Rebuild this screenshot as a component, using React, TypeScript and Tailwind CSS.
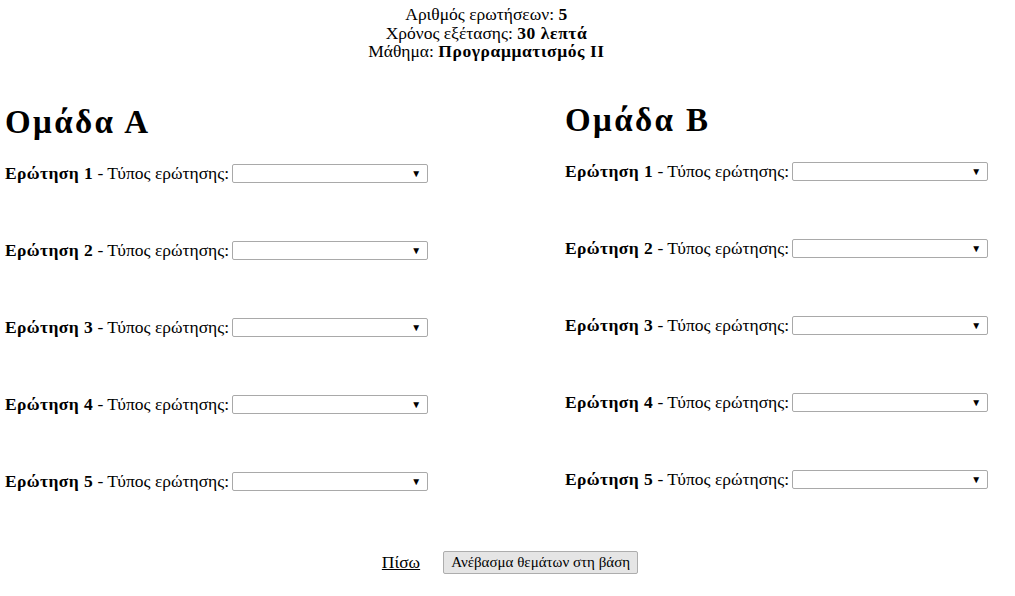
import React from 'react';

const questions = [1, 2, 3, 4, 5];

const FakeSelect = () => (
  <div className="ml-[3px] flex h-[19px] w-[196px] items-center justify-end rounded-[2px] border border-[#a9a9a9] bg-white pr-[6px]">
    <span className="text-[10px] leading-none text-black">▼</span>
  </div>
);

const Group = ({ title }: { title: string }) => (
  <div>
    <h1 className="text-[33px] font-bold leading-[37px] tracking-[2.4px]">{title}</h1>
    <div className="mt-[23px] flex flex-col gap-[57px]">
      {questions.map((n) => (
        <div key={n} className="flex h-[20px] items-center whitespace-nowrap">
          <b className="tracking-[0.4px]">Ερώτηση {n}</b>
          <span>&nbsp;- Τύπος ερώτησης:</span>
          <FakeSelect />
        </div>
      ))}
    </div>
  </div>
);

const App = () => {
  return (
    <div className="min-h-[596px] bg-white text-[17.5px] leading-[18.5px] text-black" style={{ fontFamily: '"Liberation Serif", "Times New Roman", serif' }}>
      <div className="pr-[42px] pt-[5px] text-center">
        <div>Αριθμός ερωτήσεων: <b className="tracking-[0.6px]">5</b></div>
        <div>Χρόνος εξέτασης: <b className="tracking-[0.6px]">30 λεπτά</b></div>
        <div>Μάθημα: <b className="tracking-[0.6px]">Προγραμματισμός ΙΙ</b></div>
      </div>

      <div className="mt-[43px] grid grid-cols-[560px_1fr] pl-[5px]">
        <Group title="Ομάδα Α" />
        <div className="-mt-[2px]">
          <Group title="Ομάδα Β" />
        </div>
      </div>

      <div className="mt-[59px] flex items-center justify-center gap-[23px] pl-[5px]">
        <a href="#" className="underline">Πίσω</a>
        <button className="h-[23px] rounded-[2px] border border-[#adadad] bg-[#e5e5e5] px-[7px] text-[15px] leading-none">
          Ανέβασμα θεμάτων στη βάση
        </button>
      </div>
    </div>
  );
};

export default App;
